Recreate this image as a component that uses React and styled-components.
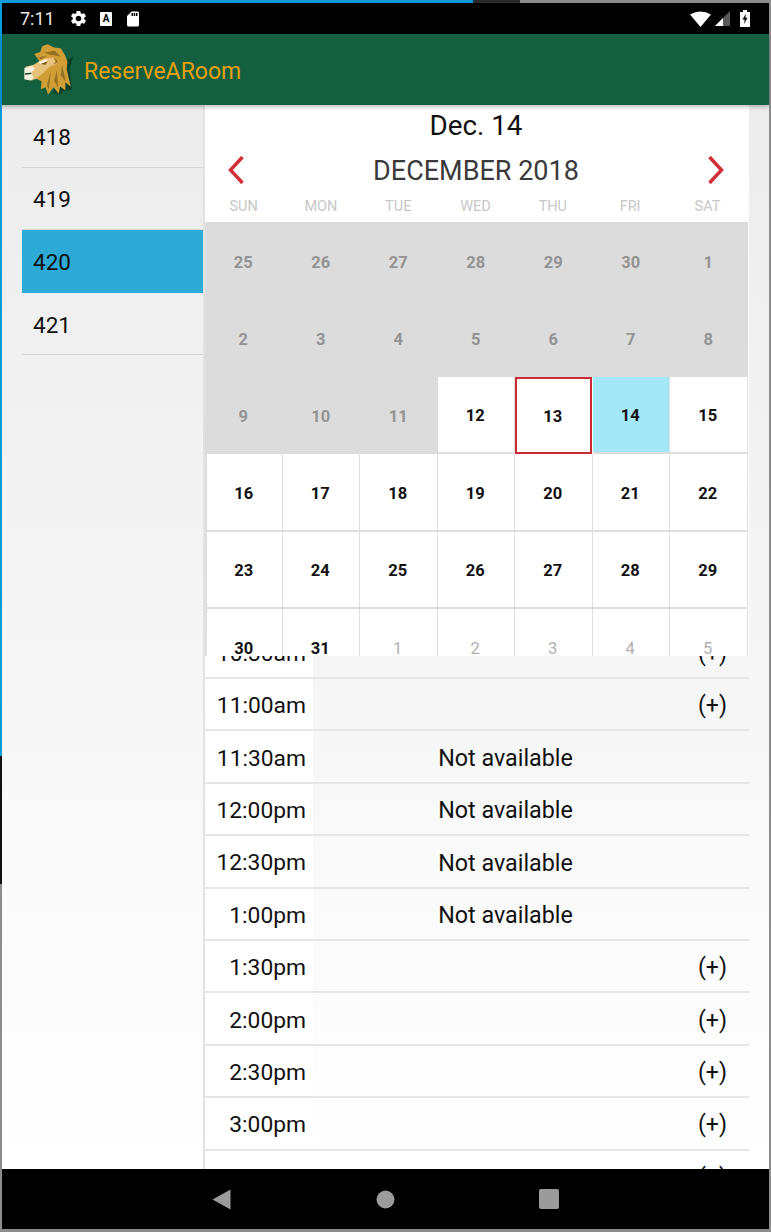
import React from 'react';
import styled, { createGlobalStyle } from 'styled-components';
import { MdSettings, MdSdCard } from 'react-icons/md';

const GlobalStyle = createGlobalStyle`
    html, body { margin: 0; padding: 0; height: 100%; }
    body { font-family: Roboto, "Liberation Sans", sans-serif; background: #fff; }
    * { box-sizing: border-box; }
`;

const rooms = ['418', '419', '420', '421'];
const weekdays = ['SUN', 'MON', 'TUE', 'WED', 'THU', 'FRI', 'SAT'];

// kind: past = greyed out, day = this month, next = next month
const days = [
    ...[25, 26, 27, 28, 29, 30, 1, 2, 3, 4, 5, 6, 7, 8, 9, 10, 11].map(n => ({ n, kind: 'past' })),
    { n: 12, kind: 'day' },
    { n: 13, kind: 'day', today: true },
    { n: 14, kind: 'day', picked: true },
    ...[15, 16, 17, 18, 19, 20, 21, 22, 23, 24, 25, 26, 27, 28, 29, 30, 31].map(n => ({ n, kind: 'day' })),
    ...[1, 2, 3, 4, 5].map(n => ({ n, kind: 'next' })),
];

const slots = [
    { time: '10:30am', free: true },
    { time: '11:00am', free: true },
    { time: '11:30am' },
    { time: '12:00pm' },
    { time: '12:30pm' },
    { time: '1:00pm' },
    { time: '1:30pm', free: true },
    { time: '2:00pm', free: true },
    { time: '2:30pm', free: true },
    { time: '3:00pm', free: true },
    { time: '3:30pm', free: true },
];

const Lion = () => (
    <LogoSvg viewBox="35 15 160 165">
        <path fill="#0c3f2a" d="M160 60 L172 72 L190 62 L178 98 L186 160 L160 166 L150 176 L130 170 Z" />
        <path fill="#d09e36" d="M72 54 L90 48 L96 30 L112 24 L132 34 L152 36 L164 56 L172 76 L170 100 L182 152 L166 140 L166 164 L150 152 L146 174 L130 154 L114 176 L106 154 L92 160 L94 136 L76 128 L100 92 Z" />
        <path fill="#94701f" d="M122 106 L116 162 L110 148 Z M140 104 L144 156 L132 134 Z M156 88 L168 138 L152 118 Z M100 50 L134 44 L152 62 L122 56 Z M84 64 L112 58 L92 70 Z" />
        <path fill="#e6c27c" d="M46 92 L70 86 L100 68 L130 64 L140 84 L118 92 L102 108 L80 128 L64 134 L44 128 Z" />
        <path fill="#f6efdc" d="M42 96 L66 90 L74 98 L62 110 L70 126 L60 134 L42 130 Z" />
        <path fill="#fff6dc" d="M84 78 L112 68 L108 76 L90 84 Z" />
        <path fill="#6f4a18" d="M92 84 L112 76 L106 86 Z M130 68 a8 8 0 1 1 -1 15 a5 5 0 0 0 1 -15 Z" />
        <path fill="#0c3f2a" d="M44 112 L62 110 L64 114 L44 116 Z" />
    </LogoSvg>
);

const App = () => (
    <Frame>
        <GlobalStyle />
        <StatusBar>
            <StatusLeft>
                <Clock>7:11</Clock>
                <MdSettings size={19} />
                <AdBadge>A</AdBadge>
                <MdSdCard size={18} />
            </StatusLeft>
            <StatusRight>
                <svg width="21" height="16" viewBox="0 0 21 16">
                    <path fill="#fff" d="M0 3.500 Q10.500 -2.500 21 3.500 L10.500 16 Z" />
                </svg>
                <svg width="15" height="15" viewBox="0 0 15 15">
                    <path fill="#fff" d="M0 15 L15 0 V15 Z" opacity=".35" />
                    <path fill="#fff" d="M0 15 L8 7 V15 Z" />
                </svg>
                <BatterySvg width="10" height="17" viewBox="0 0 10 17">
                    <path fill="#fff" d="M3 0 H7 V2 H10 V17 H0 V2 H3 Z" />
                    <path fill="#000" d="M6 3.500 L2.500 9.500 H4.700 L4 14 L7.500 7.800 H5.300 Z" />
                </BatterySvg>
            </StatusRight>
        </StatusBar>
        <AppBar>
            <Lion />
            <Title>ReserveARoom</Title>
        </AppBar>
        <Main>
            <RoomList>
                {rooms.map(room => (
                    <Room key={room} $selected={room === '420'}>{room}</Room>
                ))}
            </RoomList>
            <Pane>
                <Calendar>
                    <PickedDate>Dec. 14</PickedDate>
                    <MonthRow>
                        <svg width="16" height="28" viewBox="0 0 16 28">
                            <path d="M14.500 1 L2.500 14 L14.500 27" fill="none" stroke="#d32f3a" strokeWidth="3.500" />
                        </svg>
                        <MonthName>DECEMBER 2018</MonthName>
                        <svg width="16" height="28" viewBox="0 0 16 28">
                            <path d="M1.500 1 L13.500 14 L1.500 27" fill="none" stroke="#d32f3a" strokeWidth="3.500" />
                        </svg>
                    </MonthRow>
                    <Weekdays>
                        {weekdays.map(d => <Weekday key={d}>{d}</Weekday>)}
                    </Weekdays>
                    <DayGrid>
                        {days.map((d, i) => (
                            <Day key={i} $kind={d.kind} $today={d.today} $picked={d.picked}>{d.n}</Day>
                        ))}
                    </DayGrid>
                </Calendar>
                <Times>
                    <TimesInner>
                        {slots.map(slot => (
                            <Slot key={slot.time}>
                                <SlotTime>{slot.time}</SlotTime>
                                <SlotState>{slot.free ? '' : 'Not available'}</SlotState>
                                <SlotAdd>{slot.free ? '(+)' : ''}</SlotAdd>
                            </Slot>
                        ))}
                    </TimesInner>
                </Times>
            </Pane>
        </Main>
        <NavBar>
            <svg width="19" height="21" viewBox="0 0 19 21"><path fill="#9b9b9b" d="M18.500 0.500 V20.500 L0.500 10.500 Z" /></svg>
            <svg width="19" height="19" viewBox="0 0 19 19"><circle cx="9.500" cy="9.500" r="9" fill="#9b9b9b" /></svg>
            <svg width="20" height="20" viewBox="0 0 20 20"><rect width="20" height="20" rx="2" fill="#9b9b9b" /></svg>
        </NavBar>
    </Frame>
);

// the window edge: blue progress on top and left, black and grey further on
const Frame = styled.div`
    width: 771px;
    height: 1232px;
    padding: 3px 2px;
    display: flex;
    flex-direction: column;
    overflow: hidden;
    background:
        linear-gradient(to right, #0a9bdc 473px, #2a2a2a 473px, #2a2a2a 520px, #8c8c8c 520px) top / 100% 3px no-repeat,
        linear-gradient(to bottom, #0a9bdc 756px, #111 756px, #111 884px, #8c8c8c 884px) left / 2px 100% no-repeat,
        #8c8c8c;
`;

const StatusBar = styled.div`
    height: 31px;
    flex: none;
    background: #000;
    color: #fff;
    display: flex;
    align-items: center;
    justify-content: space-between;
    padding: 0 19px 0 18px;
`;

const StatusLeft = styled.div`
    display: flex;
    align-items: center;
    gap: 12px;
    svg { display: block; }
`;

const StatusRight = styled.div`
    display: flex;
    align-items: center;
    gap: 4px;
    svg { display: block; }
`;

const BatterySvg = styled.svg`
    margin-left: 6px;
`;

const Clock = styled.span`
    font-size: 18px;
    color: #e8e8e8;
    margin-right: 3px;
    width: 34px;
`;

const AdBadge = styled.span`
    width: 12px;
    height: 14px;
    background: #fff;
    color: #000;
    font-size: 10px;
    font-weight: 700;
    text-align: center;
    line-height: 13px;
    border-radius: 1px;
`;

const AppBar = styled.header`
    height: 71px;
    flex: none;
    background: #135f3f;
    display: flex;
    align-items: center;
    padding-left: 20px;
    gap: 9px;
    box-shadow: 0 2px 4px rgba(0, 0, 0, 0.25);
    position: relative;
    z-index: 2;
`;

const LogoSvg = styled.svg`
    width: 53px;
    height: 55px;
    flex: none;
    margin-top: -3px;
`;

const Title = styled.h1`
    margin: 0;
    padding-top: 4px;
    font-size: 23px;
    font-weight: 400;
    color: #e5a00d;
`;

const Main = styled.main`
    flex: 1;
    min-height: 0;
    display: flex;
    background: linear-gradient(to bottom, #ececec, #ffffff);
    padding-right: 20px;
`;

const RoomList = styled.ul`
    width: 203px;
    flex: none;
    margin: 0;
    padding: 0 0 0 20px;
    list-style: none;
    border-right: 2px solid #e2e2e2;
`;

const Room = styled.li`
    height: 62.600px;
    display: flex;
    align-items: center;
    padding: 2px 0 0 11px;
    font-size: 22.500px;
    color: #111;
    background: ${p => (p.$selected ? '#2eaad6' : 'transparent')};
    border-bottom: 1px solid ${p => (p.$selected ? '#2eaad6' : '#d4d4d4')};
`;

const Pane = styled.div`
    flex: 1;
    min-width: 0;
    display: flex;
    flex-direction: column;
`;

const Calendar = styled.section`
    height: 551px;
    flex: none;
    overflow: hidden;
    background: #fff;
`;

const PickedDate = styled.div`
    height: 40px;
    display: flex;
    align-items: center;
    justify-content: center;
    padding-right: 2px;
    font-size: 27.800px;
    color: #111;
`;

const MonthRow = styled.div`
    height: 50px;
    display: flex;
    align-items: center;
    justify-content: space-between;
    padding: 0 25px 0 23px;
`;

const MonthName = styled.div`
    padding-top: 2px;
    font-size: 27px;
    color: #3a3a3a;
`;

const Weekdays = styled.div`
    display: grid;
    grid-template-columns: repeat(7, 77.300px);
    height: 27px;
`;

const Weekday = styled.div`
    font-size: 14.500px;
    color: #c8c8c8;
    text-align: center;
    line-height: 24px;
`;

const DayGrid = styled.div`
    display: grid;
    grid-template-columns: repeat(7, 77.500px);
    grid-auto-rows: 77.400px;
    background: #fff;
`;

const dayBackground = p => {
    if (p.$kind === 'past') return '#dcdcdc';
    if (p.$picked) return '#a4e8f7';
    return '#fff';
};

const dayColor = p => {
    if (p.$kind === 'past') return '#939393';
    if (p.$kind === 'next') return '#b0b0b0';
    return '#111';
};

const Day = styled.div`
    display: flex;
    align-items: center;
    justify-content: center;
    padding: 3px 1px 0 0;
    font-size: 16.500px;
    font-weight: ${p => (p.$kind === 'next' ? 400 : 700)};
    color: ${dayColor};
    background: ${dayBackground};
    border-style: solid;
    border-width: ${p => (p.$kind === 'past' ? '0' : p.$today ? '2px' : '0 1px 2px 0')};
    border-color: ${p => (p.$today ? '#cc2b33' : '#dedede')};
    margin-right: ${p => (p.$today ? '1px' : '0')};
    &:nth-child(7n + 1) {
        border-left-width: ${p => (p.$kind === 'past' ? '0' : '2px')};
    }
`;

const Times = styled.section`
    flex: 1;
    min-height: 0;
    overflow: hidden;
    position: relative;
`;

const TimesInner = styled.div`
    margin-top: -29.400px;
`;

const Slot = styled.div`
    height: 52.400px;
    display: flex;
    align-items: stretch;
    font-size: 23px;
    color: #111;
    border-bottom: 2px solid #e6e6e6;
`;

const SlotTime = styled.div`
    width: 108px;
    flex: none;
    background: #fff;
    display: flex;
    align-items: center;
    justify-content: flex-end;
    padding: 3px 7px 0 0;
    font-size: 22.800px;
`;

const SlotState = styled.div`
    width: 385px;
    flex: none;
    display: flex;
    align-items: center;
    justify-content: center;
    padding-top: 3px;
    font-size: 23.300px;
`;

const SlotAdd = styled.div`
    flex: 1;
    display: flex;
    align-items: center;
    justify-content: flex-start;
    padding-top: 3px;
`;

const NavBar = styled.nav`
    height: 60px;
    flex: none;
    background: #000;
    display: flex;
    align-items: center;
    gap: 144.500px;
    padding-left: 210px;
    position: relative;
    z-index: 2;
    svg { display: block; }
`;

export default App;
